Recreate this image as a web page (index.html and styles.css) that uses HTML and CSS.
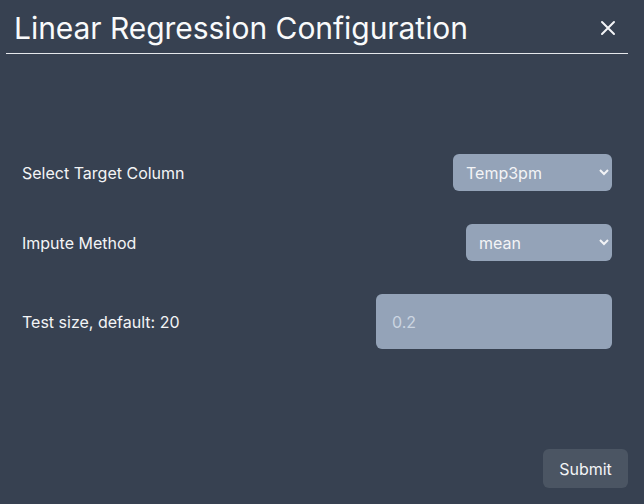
FILE: index.html
```html
<!DOCTYPE html>
<html>
<head>
<meta charset="utf-8">
<link rel="stylesheet" href="styles.css">
</head>
<body>
<div class="modal">
  <div class="header">
    <h1 class="title">Linear Regression Configuration</h1>
    <button class="close" aria-label="close">
      <svg width="16" height="16" viewBox="0 0 16 16"><path d="M2 2 L14 14 M14 2 L2 14" stroke="#f3f4f6" stroke-width="2" stroke-linecap="round"/></svg>
    </button>
  </div>
  <div class="form">
    <div class="row row-first">
      <label class="label">Select Target Column</label>
      <select class="select select-target"><option>Temp3pm</option></select>
    </div>
    <div class="row">
      <label class="label">Impute Method</label>
      <select class="select select-impute"><option>mean</option></select>
    </div>
    <div class="row row-input">
      <label class="label">Test size, default: 20</label>
      <input class="input" type="text" placeholder="0.2">
    </div>
  </div>
  <div class="footer">
    <button class="submit">Submit</button>
  </div>
</div>
</body>
</html>
```
FILE: styles.css
```css
html, body {
  margin: 0;
  padding: 0;
  background: #374151;
  height: 100%;
}
body {
  font-family: Inter, "Noto Sans", sans-serif;
  color: #f3f4f6;
}
.modal {
  width: 622px;
  margin-left: 6px;
  height: 504px;
  display: flex;
  flex-direction: column;
}
.header {
  display: flex;
  align-items: center;
  justify-content: space-between;
  border-bottom: 1px solid #e5e7eb;
  padding: 10px 12px 7px 8px;
  height: 36px;
}
.title {
  margin: 0;
  font-size: 30px;
  line-height: 36px;
  font-weight: 400;
  letter-spacing: -0.05px;
  color: #f9fafb;
}
.close {
  background: none;
  border: none;
  padding: 0;
  width: 16px;
  height: 16px;
  display: flex;
}
.form {
  padding: 0 16px 0 16px;
  display: flex;
  flex-direction: column;
}
.row {
  display: flex;
  align-items: center;
  justify-content: space-between;
  margin-top: 33px;
}
.row-first {
  margin-top: 100px;
}
.label {
  font-size: 16px;
  line-height: 24px;
}
.select {
  height: 37px;
  background-color: #94a3b8;
  color: #f3f4f6;
  border: none;
  border-radius: 6px;
  font-family: Inter, sans-serif;
  font-size: 16px;
  padding: 0 6px 0 9px;
}
.select-target { width: 159px; }
.select-impute { width: 146px; }
.input {
  width: 236px;
  height: 55px;
  box-sizing: border-box;
  background: #94a3b8;
  border: none;
  border-radius: 6px;
  padding: 0 16px;
  font-family: Inter, sans-serif;
  font-size: 16px;
  color: #f3f4f6;
}
.input::placeholder {
  color: #cbd5e1;
}
.footer {
  margin-top: auto;
  display: flex;
  justify-content: flex-end;
  padding-bottom: 16px;
}
.submit {
  background: #4b5563;
  color: #f3f4f6;
  border: none;
  border-radius: 6px;
  font-family: Inter, sans-serif;
  font-size: 16px;
  height: 39px;
  width: 85px;
}
```
